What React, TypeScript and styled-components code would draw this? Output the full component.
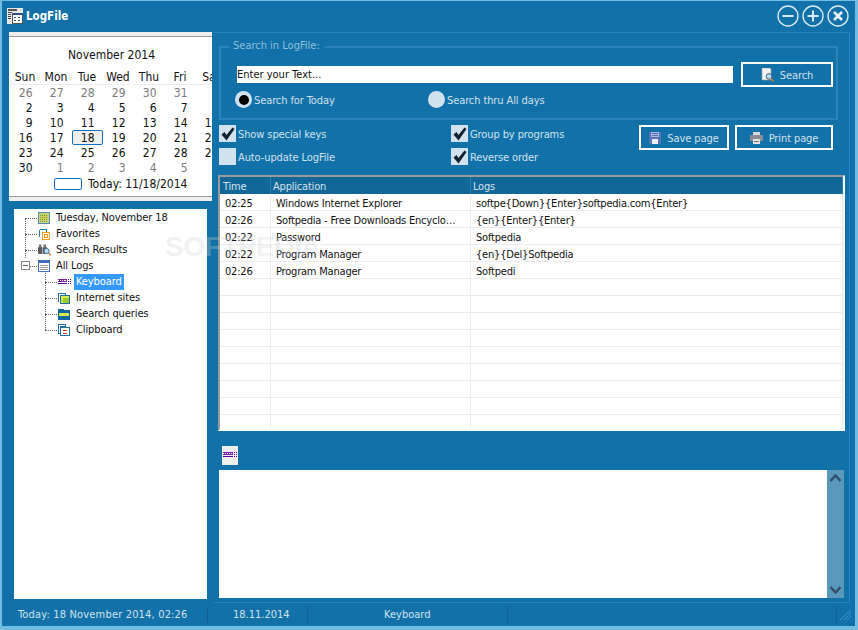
import React from 'react';
import styled, { createGlobalStyle } from 'styled-components';

const GlobalStyle = createGlobalStyle`
  html, body { margin: 0; padding: 0; width: 858px; height: 630px; overflow: hidden; }
  body { font-family: "DejaVu Sans Condensed", "DejaVu Sans", "Liberation Sans", sans-serif; font-size: 11px; }
`;

const BLUE = '#1271a9';
const EDGE = '#2a83b8';
const PALE = '#d0e2ee';

const Window = styled.div`
  position: relative;
  box-sizing: border-box;
  width: 858px;
  height: 630px;
  background: ${BLUE};
  border: solid #6fbde3;
  border-width: 1px 3px 4px 2px;
  display: flex;
  flex-direction: column;
  overflow: hidden;
`;

const TitleBar = styled.header`
  height: 30px;
  flex: none;
  display: flex;
  align-items: center;
  padding: 0 6px 1px 5px;
  gap: 3px;
`;

const TitleText = styled.div`
  color: #fff;
  font-weight: 700;
  font-size: 11.5px;
  flex: 1;
`;

const WinButtons = styled.div`
  display: flex;
  gap: 3px;
`;

const Body = styled.main`
  flex: none;
  height: 571px;
  display: flex;
`;

const LeftCol = styled.aside`
  width: 203px;
  margin-left: 7px;
  flex: none;
  display: flex;
  flex-direction: column;
`;

const Calendar = styled.section`
  height: 169px;
  background: #fff;
  border-top: 4px solid #eeeeee;
  border-bottom: 4px solid #eeeeee;
  box-sizing: border-box;
  overflow: hidden;
  color: #111;
  font-size: 12px;
  box-shadow: inset 0 1px 0 #9a9a9a, inset 0 -1px 0 #9a9a9a;
`;

const CalTitle = styled.div`
  text-align: center;
  width: 205px;
  height: 14px;
  line-height: 14px;
  margin-top: 12px;
`;

const CalGrid = styled.div`
  display: grid;
  grid-template-columns: repeat(7, 31px);
  margin-left: 0.5px;
  width: 217px;
  margin-top: 8px;
`;

const DayHead = styled.div`
  text-align: center;
  height: 14px;
  line-height: 15px;
  border-bottom: 1px solid #eeeeee;
`;

const DayCell = styled.div<{ $muted?: boolean; $today?: boolean }>`
  box-sizing: border-box;
  height: 15px;
  line-height: 17px;
  text-align: right;
  padding-right: 8px;
  color: ${(p) => (p.$muted ? '#7c7c7c' : '#111')};
  ${(p) =>
    p.$today &&
    `background:#f0f0f0; outline:1px solid #1170c4; outline-offset:-1px; border-radius:2px;`}
`;

const TodayRow = styled.div`
  display: flex;
  align-items: center;
  gap: 6px;
  margin: 1px 0 0 45px;
  height: 16px;
  white-space: nowrap;
`;

const TodayBox = styled.span`
  width: 26px;
  height: 10px;
  border: 1px solid #1170c4;
  border-radius: 2px;
`;

const TreePanel = styled.nav`
  margin: 8px 5px 0;
  width: 193px;
  height: 390px;
  padding-top: 1px;
  background: #fff;
  color: #111;
  font-size: 11px;
  box-sizing: border-box;
`;

const TreeBox = styled.div`
  position: relative;
`;

const TreeRow = styled.div<{ $depth: number }>`
  height: 16px;
  display: flex;
  align-items: center;
  padding-left: ${(p) => (p.$depth ? 31 : 11)}px;
  position: relative;
  white-space: nowrap;
`;

const DotH = styled.span`
  width: 12px;
  flex: none;
  border-top: 1px dotted #666;
`;

const TreeIcon = styled.span`
  width: 14px;
  flex: none;
  display: flex;
  align-items: center;
  margin-left: 1px;
`;

const Expander = styled.span`
  position: absolute;
  left: 7px;
  top: 3px;
  width: 7px;
  height: 7px;
  background: #fff;
  border: 1px solid #8a8a8a;
  &::after {
    content: '';
    position: absolute;
    left: 1px;
    right: 1px;
    top: 3px;
    height: 1px;
    background: #666;
  }
`;

const DotV = styled.span<{ $left: number; $top: number; $h: number }>`
  position: absolute;
  left: ${(p) => p.$left}px;
  top: ${(p) => p.$top}px;
  height: ${(p) => p.$h}px;
  border-left: 1px dotted #666;
`;

const TreeLabel = styled.span<{ $selected?: boolean }>`
  padding: 0 2px;
  margin-left: 2px;
  height: 16px;
  line-height: 16px;
  letter-spacing: -0.1px;
  ${(p) => p.$selected && 'background:#3399ff;color:#fff;'}
`;

const RightCol = styled.div`
  margin-left: 2px;
  width: 636px;
  height: 571px;
  box-sizing: border-box;
  border: 1px solid ${EDGE};
  border-left: 0;
  display: flex;
  flex-direction: column;
  padding: 0 0 0 3px;
`;

const SearchGroup = styled.fieldset`
  margin: 13px 11px 0 2px;
  padding: 0;
  height: 74px;
  box-sizing: border-box;
  border: 2px solid ${EDGE};
  position: relative;
  min-width: 0;
`;

const Legend = styled.span`
  position: absolute;
  left: 8px;
  top: -9px;
  background: ${BLUE};
  padding: 0 4px;
  color: #8fbfdc;
  font-size: 11px;
  line-height: 14px;
`;

const SearchRow = styled.div`
  display: flex;
  align-items: center;
  gap: 8px;
  margin: 14px 0 0 16px;
  height: 25px;
`;

const SearchInput = styled.div`
  width: 496px;
  height: 17px;
  line-height: 18px;
  background: #fff;
  color: #111;
  font-size: 11px;
`;

const OutlineBtn = styled.button<{ $w: number }>`
  width: ${(p) => p.$w}px;
  height: 25px;
  box-sizing: border-box;
  background: transparent;
  border: 2px solid #fff;
  color: ${PALE};
  font: inherit;
  font-size: 11px;
  display: flex;
  align-items: center;
  justify-content: center;
  gap: 6px;
  padding: 0;
`;

// nudges the words down a pixel against the icon beside them
const Caption = styled.span`
  padding-top: 2px;
  letter-spacing: -0.1px;
`;

const RadioRow = styled.div`
  display: flex;
  margin: 3px 0 0 14px;
  height: 19px;
  align-items: center;
`;

const Radio = styled.div<{ $w: number }>`
  width: ${(p) => p.$w}px;
  display: flex;
  align-items: center;
  gap: 2px;
  color: ${PALE};
  font-size: 11px;
`;

const RadioDot = styled.span<{ $on?: boolean }>`
  width: 17px;
  height: 17px;
  border-radius: 50%;
  background: ${PALE};
  display: flex;
  align-items: center;
  justify-content: center;
  &::after {
    content: '';
    width: 10px;
    height: 10px;
    border-radius: 50%;
    background: ${(p) => (p.$on ? '#000' : 'transparent')};
  }
`;

const OptionsRow = styled.div`
  display: flex;
  margin: 5px 0 0 2px;
  height: 50px;
`;

const CheckCol = styled.div<{ $w: number }>`
  width: ${(p) => p.$w}px;
  display: flex;
  flex-direction: column;
  gap: 6px;
`;

const CheckItem = styled.label`
  display: flex;
  align-items: center;
  gap: 2px;
  height: 17px;
  color: ${PALE};
  font-size: 11px;
  white-space: nowrap;
`;

const CheckBox = styled.span`
  width: 17px;
  height: 17px;
  flex: none;
  background: ${PALE};
  display: flex;
  align-items: center;
  justify-content: center;
`;

const PageButtons = styled.div`
  display: flex;
  gap: 6px;
  margin-left: -1px;
  height: 25px;
`;

const LogTable = styled.div`
  margin: 0 4px 0 1px;
  height: 256px;
  box-sizing: border-box;
  border: 2px solid #fff;
  border-top-color: #9a9a9a;
  border-left-color: #9a9a9a;
  background: #fff;
  overflow: hidden;
  color: #111;
  font-size: 11px;
  letter-spacing: -0.2px;
`;

const TableRow = styled.div<{ $head?: boolean }>`
  display: grid;
  grid-template-columns: 51px 200px 1fr;
  height: 17px;
  box-sizing: border-box;
  line-height: ${(p) => (p.$head ? 19 : 20)}px;
  background: ${(p) => (p.$head ? '#126799' : '#fff')};
  color: ${(p) => (p.$head ? PALE : '#111')};
  border-bottom: ${(p) => (p.$head ? '0' : '1px solid #ececec')};
`;

const Cell = styled.div<{ $head?: boolean }>`
  padding-left: ${(p) => (p.$head ? 2 : 5)}px;
  border-right: 1px solid ${(p) => (p.$head ? '#2a7cab' : '#ececec')};
  overflow: hidden;
  white-space: nowrap;
  ${(p) => p.$head && '&:first-child { padding-left: 3px; }'}
`;

const IconStrip = styled.div`
  height: 39px;
  display: flex;
  align-items: flex-start;
  padding: 15px 0 0 5px;
  box-sizing: border-box;
`;

const IconTile = styled.div`
  width: 16px;
  height: 19px;
  background: #efefef;
  display: flex;
  align-items: center;
  justify-content: center;
`;

const Memo = styled.div`
  margin-left: 2px;
  width: 625px;
  height: 128px;
  background: #fff;
  display: flex;
  justify-content: flex-end;
`;

const MemoScroll = styled.div`
  width: 17px;
  background: #5b98bd;
  display: flex;
  flex-direction: column;
  justify-content: space-between;
  align-items: center;
  padding: 3px 0;
  box-sizing: border-box;
`;

const StatusBar = styled.footer`
  flex: 1;
  display: flex;
  align-items: center;
  color: ${PALE};
  font-size: 11px;
`;

const StatusCell = styled.div<{ $w: number; $pad: number; $track?: number }>`
  width: ${(p) => p.$w}px;
  box-sizing: border-box;
  padding-left: ${(p) => p.$pad}px;
  height: 15px;
  line-height: 15px;
  border-right: 1px solid #0f5f90;
  white-space: nowrap;
  letter-spacing: ${(p) => p.$track ?? 0}px;
`;

const Grip = styled.div`
  margin-left: auto;
  display: flex;
  align-items: center;
  height: 15px;
  border-left: 1px solid #0f5f90;
  padding-left: 2px;
  margin-right: 3px;
`;

const Watermark = styled.div`
  position: absolute;
  left: 163px;
  top: 230px;
  font-family: "Liberation Sans", sans-serif;
  font-weight: 700;
  font-size: 28px;
  letter-spacing: -0.5px;
  color: rgba(205, 210, 215, 0.3);
  pointer-events: none;
`;

const Ring = ({ children }: { children: React.ReactNode }) => (
  <svg width="22" height="22" viewBox="0 0 22 22" fill="none" stroke="#fff">
    <circle cx="11" cy="11" r="10" strokeWidth="1.4" stroke="#d8ecf7" />
    {children}
  </svg>
);

const Check = () => (
  <svg width="14" height="14" viewBox="0 0 14 14">
    <path d="M0.5 7.5 L3.5 5 L5.5 8 L11.5 0.5 L13.5 2 L5.5 13.5 Z" fill="#14202e" />
  </svg>
);

const KeyboardIcon = () => (
  <svg width="15" height="7" viewBox="0 0 15 7" shapeRendering="crispEdges">
    <path d="M0 0h10v1H0zM0 2h10v1H0z" fill="#7a22a8" />
    <path d="M1 1h1v1H1zM3 1h1v1H3zM5 1h1v1H5zM7 1h1v1H7zM9 1h1v1H9z" fill="#7a22a8" />
    <path d="M0 4h10v1H0z" fill="#5a00a0" />
    <path d="M11 0h1v1h-1zM13 0h1v1h-1zM11 2h1v1h-1zM13 2h1v1h-1zM11 4h1v1h-1zM13 4h1v1h-1z" fill="#5a00a0" />
  </svg>
);

const AppIcon = () => (
  <svg width="16" height="16" viewBox="0 0 16 16" shapeRendering="crispEdges">
    <rect width="16" height="16" fill="#e8e8e8" />
    <path d="M1 1h9v2H1z" fill="#555" />
    <path d="M1 4h4v1H1zM1 6h3v1H1zM1 8h3v1H1zM1 10h3v1H1z" fill="#444" />
    <rect x="5" y="5" width="10" height="10" fill="#fff" stroke="#555" />
    <path d="M5 5h10v2H5z" fill="#2b4f86" />
    <path d="M7 9h2v1H7zM11 9h2v1h-2zM7 12h2v1H7zM11 12h2v1h-2z" fill="#2b4f86" />
  </svg>
);

const CalendarIcon = () => (
  <svg width="12" height="12" viewBox="0 0 12 12" shapeRendering="crispEdges">
    <rect x="0.5" y="0.5" width="11" height="11" fill="#b9e07a" stroke="#5f86b8" />
    <path d="M3 2v8M5 2v8M7 2v8M9 2v8" stroke="#f3c24a" />
    <path d="M2 3h8M2 5h8M2 7h8M2 9h8" stroke="#5da04a" strokeDasharray="1 1" />
  </svg>
);

const FavoritesIcon = () => (
  <svg width="12" height="12" viewBox="0 0 12 12" fill="none" shapeRendering="crispEdges">
    <path d="M1.5 8.5v-6l1-1h6v3" stroke="#1f7fb8" />
    <rect x="4.5" y="4.5" width="7" height="7" stroke="#f29a1f" />
    <rect x="6.5" y="6.5" width="3" height="3" stroke="#f29a1f" />
  </svg>
);

const SearchIcon = () => (
  <svg width="14" height="12" viewBox="0 0 14 12">
    <rect x="0" y="3" width="4.5" height="7" rx="1" fill="#5a5a5a" />
    <rect x="5" y="3" width="4" height="7" rx="1" fill="#5a5a5a" />
    <rect x="1" y="0.5" width="2.5" height="3" fill="#777" />
    <rect x="5.5" y="0.5" width="2.5" height="3" fill="#777" />
    <circle cx="8.5" cy="7" r="2.6" fill="#b8dcf2" stroke="#3f6f90" />
    <path d="M10.5 9 L13 11.5" stroke="#b6803a" strokeWidth="1.4" />
  </svg>
);

const AllLogsIcon = () => (
  <svg width="12" height="12" viewBox="0 0 12 12" shapeRendering="crispEdges">
    <rect x="0.5" y="0.5" width="11" height="11" fill="#fff" stroke="#3f6fb8" />
    <path d="M1 1h10v2H1z" fill="#3f6fb8" />
    <path d="M2 5h8M2 7h8M2 9h8" stroke="#9a9a9a" />
  </svg>
);

const SitesIcon = () => (
  <svg width="12" height="11" viewBox="0 0 12 11" shapeRendering="crispEdges">
    <path d="M0.5 8.5v-8h7v2" fill="none" stroke="#1f6f9f" />
    <rect x="2.5" y="2.5" width="9" height="8" fill="#d6e84a" stroke="#1f6f9f" />
    <rect x="5" y="5" width="6" height="5" fill="#9dc92a" />
  </svg>
);

const QueriesIcon = () => (
  <svg width="12" height="11" viewBox="0 0 12 11" shapeRendering="crispEdges">
    <path d="M0 0h5l1 1h6v10H0z" fill="#11689a" />
    <rect x="1" y="4" width="10" height="3" fill="#d6e84a" />
  </svg>
);

const ClipboardIcon = () => (
  <svg width="12" height="12" viewBox="0 0 12 12" fill="none" shapeRendering="crispEdges">
    <path d="M0.5 0.5h7v2h-5v7h-2z" stroke="#1f6f9f" />
    <rect x="2.5" y="3.5" width="9" height="8" fill="#fff" stroke="#1f6f9f" />
    <path d="M5 6h4M5 9h4" stroke="#d0402a" />
  </svg>
);

const PageSearchIcon = () => (
  <svg width="13" height="14" viewBox="0 0 13 14">
    <path d="M1 0h8l1 1v11H1z" fill="#f2f2f2" stroke="#9aa5ad" strokeWidth="0.6" />
    <circle cx="8" cy="8.5" r="2.8" fill="#bcdcf0" stroke="#38627e" />
    <path d="M10 10.5 L12.5 13.5" stroke="#c08a3c" strokeWidth="1.4" />
  </svg>
);

const SaveIcon = () => (
  <svg width="12" height="12" viewBox="0 0 12 12" shapeRendering="crispEdges">
    <rect width="12" height="12" fill="#5a72b8" />
    <rect x="2" y="0" width="8" height="5" fill="#a9b8de" />
    <path d="M3 1h6M3 3h6" stroke="#5a72b8" />
    <rect x="3" y="7" width="6" height="5" fill="#eef0f5" />
  </svg>
);

const PrintIcon = () => (
  <svg width="13" height="12" viewBox="0 0 13 12" shapeRendering="crispEdges">
    <rect x="3" y="0" width="7" height="4" fill="#d8d8d8" />
    <rect x="0" y="3" width="13" height="6" fill="#8c8c96" />
    <rect x="3" y="7" width="7" height="5" fill="#e4e4e4" />
    <path d="M4 9h5" stroke="#777" />
  </svg>
);

const week = ['Sun', 'Mon', 'Tue', 'Wed', 'Thu', 'Fri', 'Sat'];
const calendar: [number, boolean][] = [
  ...[26, 27, 28, 29, 30, 31].map((d): [number, boolean] => [d, true]),
  [1, false],
  ...Array.from({ length: 29 }, (_, i): [number, boolean] => [i + 2, false]),
  ...[1, 2, 3, 4, 5, 6].map((d): [number, boolean] => [d, true]),
];

const logs = [
  ['02:25', 'Windows Internet Explorer', 'softpe{Down}{Enter}softpedia.com{Enter}'],
  ['02:26', 'Softpedia - Free Downloads Encyclo…', '{en}{Enter}{Enter}'],
  ['02:22', 'Password', 'Softpedia'],
  ['02:22', 'Program Manager', '{en}{Del}Softpedia'],
  ['02:26', 'Program Manager', 'Softpedi'],
  ...Array.from({ length: 9 }, () => ['', '', '']),
];

const App = () => (
  <>
    <GlobalStyle />
    <Window>
      <TitleBar>
        <AppIcon />
        <TitleText>LogFile</TitleText>
        <WinButtons>
          <Ring>
            <path d="M5.5 11h11" stroke="#d8ecf7" strokeWidth="2" />
          </Ring>
          <Ring>
            <path d="M5.5 11h11M11 5.5v11" stroke="#d8ecf7" strokeWidth="2" />
          </Ring>
          <Ring>
            <path d="M7 7l8 8M15 7l-8 8" stroke="#e8f3fa" strokeWidth="2.6" />
          </Ring>
        </WinButtons>
      </TitleBar>

      <Body>
        <LeftCol>
          <Calendar>
            <CalTitle>November 2014</CalTitle>
            <CalGrid>
              {week.map((d) => (
                <DayHead key={d}>{d}</DayHead>
              ))}
              {calendar.map(([d, muted], i) => (
                <DayCell key={i} $muted={muted} $today={!muted && d === 18}>
                  {d}
                </DayCell>
              ))}
            </CalGrid>
            <TodayRow>
              <TodayBox />
              Today: 11/18/2014
            </TodayRow>
          </Calendar>

          <TreePanel>
            <TreeBox>
              <DotV $left={11} $top={8} $h={40} />
              <DotV $left={31} $top={56} $h={64} />
              <TreeRow $depth={0}>
                <DotH />
                <TreeIcon><CalendarIcon /></TreeIcon>
                <TreeLabel>Tuesday, November 18</TreeLabel>
              </TreeRow>
              <TreeRow $depth={0}>
                <DotH />
                <TreeIcon><FavoritesIcon /></TreeIcon>
                <TreeLabel>Favorites</TreeLabel>
              </TreeRow>
              <TreeRow $depth={0}>
                <DotH />
                <TreeIcon><SearchIcon /></TreeIcon>
                <TreeLabel>Search Results</TreeLabel>
              </TreeRow>
              <TreeRow $depth={0}>
                <Expander />
                <DotH />
                <TreeIcon><AllLogsIcon /></TreeIcon>
                <TreeLabel>All Logs</TreeLabel>
              </TreeRow>
              <TreeRow $depth={1}>
                <DotH />
                <TreeIcon><KeyboardIcon /></TreeIcon>
                <TreeLabel $selected>Keyboard</TreeLabel>
              </TreeRow>
              <TreeRow $depth={1}>
                <DotH />
                <TreeIcon><SitesIcon /></TreeIcon>
                <TreeLabel>Internet sites</TreeLabel>
              </TreeRow>
              <TreeRow $depth={1}>
                <DotH />
                <TreeIcon><QueriesIcon /></TreeIcon>
                <TreeLabel>Search queries</TreeLabel>
              </TreeRow>
              <TreeRow $depth={1}>
                <DotH />
                <TreeIcon><ClipboardIcon /></TreeIcon>
                <TreeLabel>Clipboard</TreeLabel>
              </TreeRow>
            </TreeBox>
          </TreePanel>
        </LeftCol>

        <RightCol>
          <SearchGroup>
            <Legend>Search in LogFile:</Legend>
            <SearchRow>
              <SearchInput>Enter your Text...</SearchInput>
              <OutlineBtn $w={92}>
                <PageSearchIcon />
                <Caption>Search</Caption>
              </OutlineBtn>
            </SearchRow>
            <RadioRow>
              <Radio $w={193}>
                <RadioDot $on />
                <Caption>Search for Today</Caption>
              </Radio>
              <Radio $w={200}>
                <RadioDot />
                <Caption>Search thru All days</Caption>
              </Radio>
            </RadioRow>
          </SearchGroup>

          <OptionsRow>
            <CheckCol $w={232}>
              <CheckItem>
                <CheckBox>
                  <Check />
                </CheckBox>
                <Caption>Show special keys</Caption>
              </CheckItem>
              <CheckItem>
                <CheckBox />
                <Caption>Auto-update LogFile</Caption>
              </CheckItem>
            </CheckCol>
            <CheckCol $w={189}>
              <CheckItem>
                <CheckBox>
                  <Check />
                </CheckBox>
                <Caption>Group by programs</Caption>
              </CheckItem>
              <CheckItem>
                <CheckBox>
                  <Check />
                </CheckBox>
                <Caption>Reverse order</Caption>
              </CheckItem>
            </CheckCol>
            <PageButtons>
              <OutlineBtn $w={90}>
                <SaveIcon />
                <Caption>Save page</Caption>
              </OutlineBtn>
              <OutlineBtn $w={98}>
                <PrintIcon />
                <Caption>Print page</Caption>
              </OutlineBtn>
            </PageButtons>
          </OptionsRow>

          <LogTable>
            <TableRow $head>
              <Cell $head>Time</Cell>
              <Cell $head>Application</Cell>
              <Cell $head>Logs</Cell>
            </TableRow>
            {logs.map((row, i) => (
              <TableRow key={i}>
                {row.map((c, j) => (
                  <Cell key={j}>{c}</Cell>
                ))}
              </TableRow>
            ))}
          </LogTable>

          <IconStrip>
            <IconTile>
              <KeyboardIcon />
            </IconTile>
          </IconStrip>

          <Memo>
            <MemoScroll>
              <svg width="13" height="10" viewBox="0 0 13 10" fill="none">
                <path d="M1.5 8 L6.5 2.5 L11.5 8" stroke="#33506b" strokeWidth="2.4" />
              </svg>
              <svg width="13" height="10" viewBox="0 0 13 10" fill="none">
                <path d="M1.5 2 L6.5 7.5 L11.5 2" stroke="#33506b" strokeWidth="2.4" />
              </svg>
            </MemoScroll>
          </Memo>
        </RightCol>
      </Body>

      <StatusBar>
        <StatusCell $w={206} $pad={16} $track={0.17}>Today: 18 November 2014, 02:26</StatusCell>
        <StatusCell $w={100} $pad={25}>18.11.2014</StatusCell>
        <StatusCell $w={200} $pad={76}>Keyboard</StatusCell>
        <Grip>
          <svg width="13" height="12" viewBox="0 0 13 12" stroke="#3a92c8" fill="none">
            <path d="M12 1 L1 11M12 4 L5 11M12 7 L8 11" />
          </svg>
        </Grip>
      </StatusBar>
      <Watermark>SOFTPEDIA</Watermark>
    </Window>
  </>
);

export default App;
